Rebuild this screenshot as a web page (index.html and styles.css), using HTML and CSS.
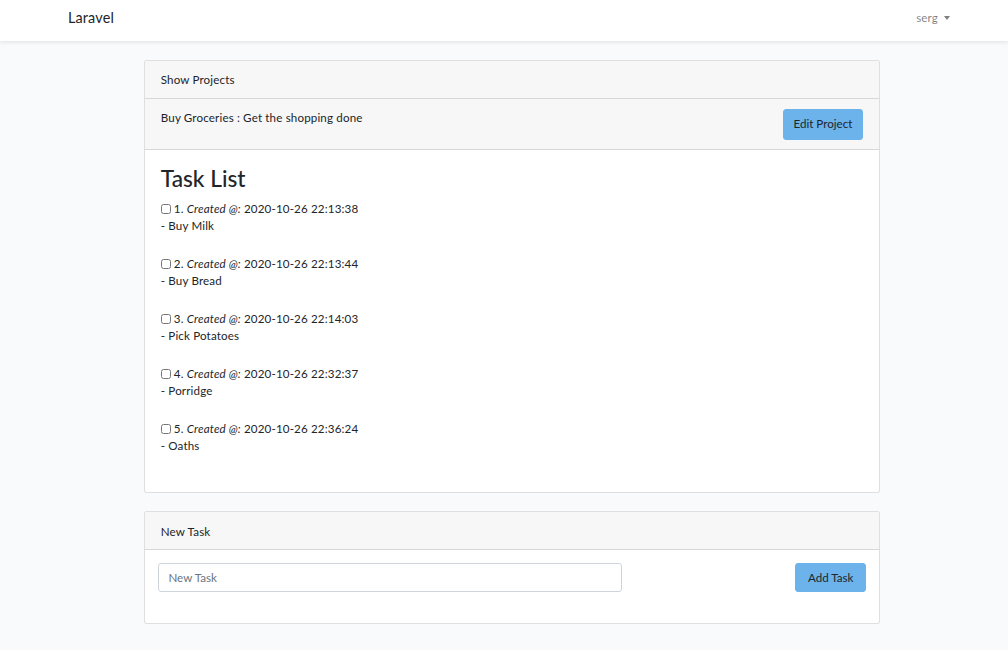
FILE: index.html
```html
<!DOCTYPE html>
<html lang="en">
<head>
<meta charset="utf-8">
<title>Laravel</title>
<link rel="stylesheet" href="styles.css">
</head>
<body>
<nav class="navbar">
  <div class="nav-inner">
    <a class="brand" href="#">Laravel</a>
    <a class="user" href="#">serg <span class="caret"></span></a>
  </div>
</nav>
<main class="main">
  <div class="card">
    <div class="card-header">Show Projects</div>
    <div class="card-header project-row">
      <span>Buy Groceries : Get the shopping done</span>
      <button class="btn">Edit Project</button>
    </div>
    <div class="card-body">
      <h2 class="title">Task List</h2>
      <div class="task"><div><input type="checkbox" class="check"> 1. <em>Created @:</em> 2020-10-26 22:13:38</div><div>- Buy Milk</div></div>
      <div class="task"><div><input type="checkbox" class="check"> 2. <em>Created @:</em> 2020-10-26 22:13:44</div><div>- Buy Bread</div></div>
      <div class="task"><div><input type="checkbox" class="check"> 3. <em>Created @:</em> 2020-10-26 22:14:03</div><div>- Pick Potatoes</div></div>
      <div class="task"><div><input type="checkbox" class="check"> 4. <em>Created @:</em> 2020-10-26 22:32:37</div><div>- Porridge</div></div>
      <div class="task"><div><input type="checkbox" class="check"> 5. <em>Created @:</em> 2020-10-26 22:36:24</div><div>- Oaths</div></div>
    </div>
  </div>
  <div class="card card2">
    <div class="card-header">New Task</div>
    <div class="card-body form-body">
      <form class="form-row">
        <input type="text" class="input" placeholder="New Task">
        <button type="button" class="btn">Add Task</button>
      </form>
    </div>
  </div>
</main>
</body>
</html>
```
FILE: styles.css
```css
* { box-sizing: border-box; }
html, body { margin: 0; padding: 0; }
body {
  background: #f8fafc;
  font-family: "Lato", "Noto Sans", sans-serif;
  font-size: 11.6px;
  letter-spacing: 0.15px;
  line-height: 18.1px;
  color: #212529;
}
.navbar {
  background: #fff;
  height: 41px;
  box-shadow: 0 1.6px 3.2px rgba(0,0,0,0.075);
}
.nav-inner {
  height: 41px;
  display: flex;
  align-items: center;
  justify-content: space-between;
  padding: 0 58px 0 68px;
}
.brand {
  color: #212529;
  text-decoration: none;
  font-size: 14.4px;
  margin-top: -4px;
}
.user {
  color: rgba(0,0,0,0.5);
  text-decoration: none;
  margin-top: -4px;
  display: flex;
  align-items: center;
}
.caret {
  display: inline-block;
  width: 0; height: 0;
  margin-left: 6px;
  border-left: 3.5px solid transparent;
  border-right: 3.5px solid transparent;
  border-top: 4px solid rgba(0,0,0,0.5);
  margin-top: -1px;
}
.main {
  width: 736px;
  margin: 19px 0 0 144px;
}
.card {
  background: #fff;
  border: 1px solid rgba(0,0,0,0.125);
  border-radius: 3px;
  overflow: hidden;
}
.card2 { margin-top: 18px; }
.card-header {
  background: #f7f7f7;
  border-bottom: 1px solid rgba(0,0,0,0.125);
  padding: 10.45px 15.75px 8.45px;
}
.project-row {
  display: flex;
  justify-content: space-between;
  align-items: flex-start;
  padding-bottom: 9.5px;
  padding-top: 9.45px;
}
.project-row > span { padding-top: 1px; }
.project-row .btn { margin-top: 1px; margin-right: 0; }
.btn {
  font: inherit;
  background: #6cb2eb;
  color: #212529;
  border: 1px solid #6cb2eb;
  border-radius: 3px;
  padding: 5px 9.9px;
  line-height: 18.1px;
  cursor: pointer;
}
.card-body {
  padding: 14.75px 15.75px 37px;
}
.title {
  font-size: 22.7px;
  font-weight: 500;
  letter-spacing: 0;
  line-height: 27.2px;
  margin: 0 0 7px;
}
.task { margin-bottom: 18.9px; }
.task > div:first-child { padding-top: 1px; margin-bottom: -1px; }
.task:last-child { margin-bottom: 0; }
.check {
  width: 10px;
  height: 10px;
  margin: 0;
  vertical-align: -1px;
}
.form-body { padding: 13px 13px 31px 13px; }
.form-row {
  display: flex;
  justify-content: space-between;
  align-items: center;
}
.input {
  font: inherit;
  width: 464px;
  height: 29px;
  padding: 4.7px 9.45px;
  border: 1px solid #ced4da;
  border-radius: 3px;
  color: #495057;
  background: #fff;
}
.input::placeholder { color: #6c757d; }
.form-row .btn { height: 29px; padding: 0 11.5px; }
```
